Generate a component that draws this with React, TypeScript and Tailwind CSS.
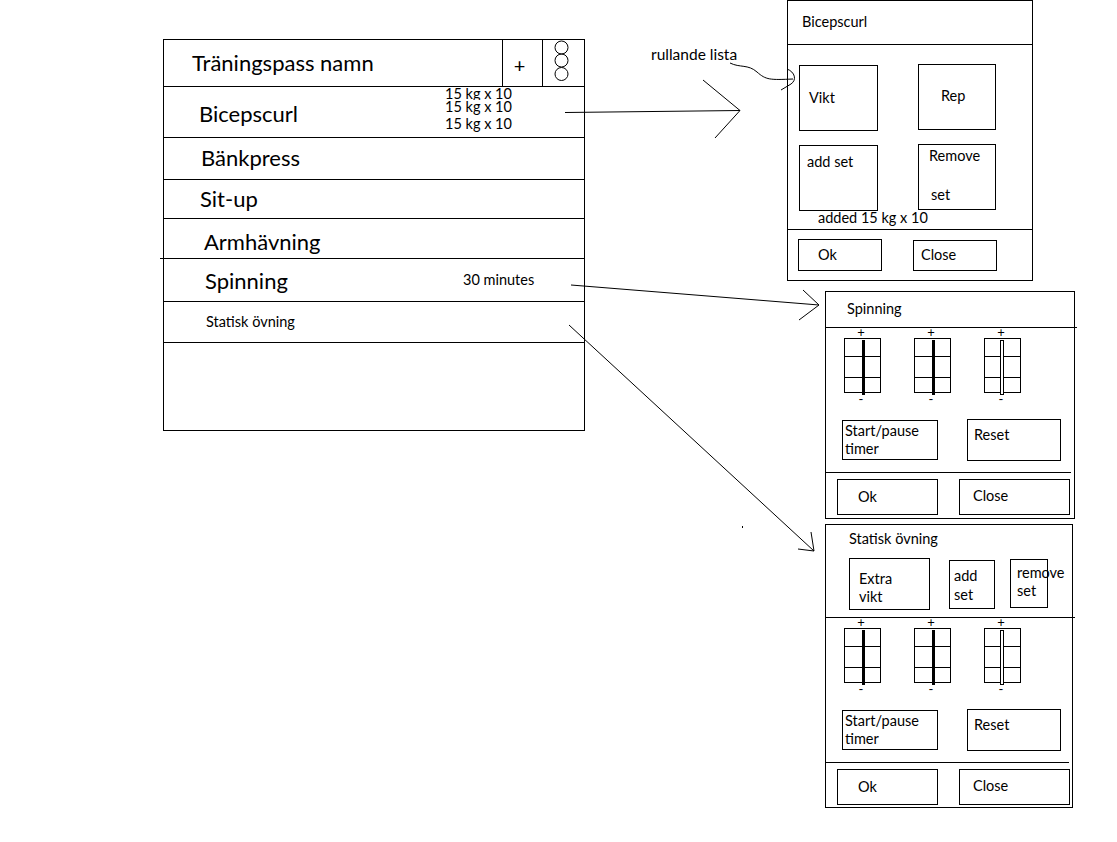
import React from 'react'

const font = "font-['Lato','Open_Sans',sans-serif]"

function Slider({ hollow }: { hollow?: boolean }) {
  return (
    <div className="flex flex-col items-center w-[37px]">
      <span className="h-[10px] text-[13px] leading-[8px] pr-[3px]">+</span>
      <svg width="37" height="58" viewBox="0 0 37 58">
        <rect x="0.5" y="0.5" width="36" height="54" fill="white" stroke="black" />
        <line x1="0" y1="18.5" x2="37" y2="18.5" stroke="black" />
        <line x1="0" y1="39.5" x2="37" y2="39.5" stroke="black" />
        {hollow
          ? <rect x="16.5" y="2.5" width="3" height="54" fill="white" stroke="black" />
          : <rect x="18" y="2" width="3" height="55" fill="black" />}
      </svg>
      <span className="h-[10px] text-[13px] leading-[6px] pr-[3px]">-</span>
    </div>
  )
}

function TimerBody() {
  return (
    <div className="h-[144px]">
      <div className="flex pl-[18px] gap-[33px]">
        <Slider />
        <Slider />
        <Slider hollow />
      </div>
      <div className="flex items-start mt-[14px]">
        <div className="ml-[16px] w-[96px] h-[40px] border border-black pl-[2px] pt-[1px] leading-[18px]">
          Start/pause<br />timer
        </div>
        <div className="ml-[29px] -mt-px w-[94px] h-[42px] border border-black pl-[6px] pt-[6px] leading-[18px]">
          Reset
        </div>
      </div>
    </div>
  )
}

function OkClose() {
  return (
    <>
      <div className="h-px bg-black mr-[3px]" />
      <div className="flex items-start pt-[6px]">
        <div className="ml-[11px] w-[101px] h-[36px] border border-black flex items-center pl-[20px]">Ok</div>
        <div className="ml-[21px] w-[111px] h-[36px] border border-black flex items-center pl-[13px] pb-[3px]">Close</div>
      </div>
    </>
  )
}

function Row({ h, children, className = '' }: { h: string; children: React.ReactNode; className?: string }) {
  return <div className={`${h} border-b border-black flex items-center ${className}`}>{children}</div>
}

export default function App() {
  return (
    <div className={`relative w-[1117px] h-[842px] bg-white text-black text-[14.5px] overflow-hidden ${font}`}>
      <div className="flex items-start">
        {/* main list */}
        <div className="pl-[163px] pt-[39px]">
          <div className="w-[422px] h-[392px] border border-black flex flex-col">
            <div className="h-[47px] border-b border-black flex">
              <div className="flex-1 flex items-center pl-[28px] pb-[2px] text-[22px]">Träningspass namn</div>
              <div className="w-[40px] border-l border-black flex items-center justify-center pr-[6px] pt-[3px] text-[20px]">+</div>
              <div className="w-[42px] border-l border-black">
                <svg width="41" height="46" viewBox="0 0 41 46">
                  <circle cx="18.5" cy="7.5" r="6.5" fill="none" stroke="black" />
                  <circle cx="18.5" cy="20.5" r="6.5" fill="none" stroke="black" />
                  <circle cx="18.5" cy="34" r="6.5" fill="none" stroke="black" />
                </svg>
              </div>
            </div>
            <div className="h-[51px] border-b border-black flex items-start pl-[35px]">
              <div className="w-[246px] pt-[14px] text-[22px] leading-[26px]">Bicepscurl</div>
              <div className="flex flex-col">
                <span className="h-[13px] leading-[14px] overflow-hidden">15 kg x 10</span>
                <span className="h-[17px] leading-[14px] bg-white">15 kg x 10</span>
                <span className="h-[14px] leading-[14px]">15 kg x 10</span>
              </div>
            </div>
            <Row h="h-[42px]" className="pl-[37px] pb-[2px] text-[22px]">Bänkpress</Row>
            <Row h="h-[39px]" className="pl-[36px] pb-[2px] text-[22px]">Sit-up</Row>
            <Row h="h-[40px]" className="pl-[40px] pt-[5px] text-[22px]">Armhävning</Row>
            <Row h="h-[43px]" className="pl-[41px] text-[22px]">
              <span className="w-[258px]">Spinning</span>
              <span className="text-[14.5px]">30 minutes</span>
            </Row>
            <Row h="h-[41px]" className="pl-[42px]">Statisk övning</Row>
            <div className="flex-1" />
          </div>
        </div>

        {/* dialogs */}
        <div className="ml-[202px] flex flex-col items-start">
          <div className="w-[246px] h-[281px] border border-black">
            <div className="h-[44px] border-b border-black flex items-center pl-[14px] pb-[2px]">Bicepscurl</div>
            <div className="h-[185px] border-b border-black pt-[20px]">
              <div className="flex items-start">
                <div className="ml-[11px] w-[79px] h-[66px] border border-black flex items-center pl-[9px]">Vikt</div>
                <div className="ml-[40px] -mt-px w-[78px] h-[66px] border border-black flex items-center pl-[22px] pb-[3px]">Rep</div>
              </div>
              <div className="flex items-start mt-[14px]">
                <div className="ml-[11px] w-[79px] h-[66px] border border-black pl-[7px] pt-[8px] leading-[16px]">add set</div>
                <div className="ml-[40px] -mt-px w-[78px] h-[66px] border border-black pl-[10px] pt-[3px] leading-[16px]">
                  <div>Remove</div>
                  <div className="mt-[23px] ml-[2px]">set</div>
                </div>
              </div>
              <div className="pl-[30px] leading-[14px]">added 15 kg x 10</div>
            </div>
            <div className="flex items-start pt-[9px]">
              <div className="ml-[10px] w-[84px] h-[32px] border border-black flex items-center pl-[19px]">Ok</div>
              <div className="ml-[31px] mt-px w-[84px] h-[31px] border border-black flex items-center pl-[7px] pb-[2px]">Close</div>
            </div>
          </div>

          <div className="ml-[38px] mt-[10px] w-[250px] h-[228px] border border-black">
            <div className="h-[36px] border-b border-black flex items-center pl-[21px] pb-[2px] -mr-[3px]">Spinning</div>
            <TimerBody />
            <OkClose />
          </div>

          <div className="ml-[38px] mt-[5px] w-[248px] h-[284px] border border-black">
            <div className="h-[93px] border-b border-black -mr-[3px]">
              <div className="h-[28px] flex items-center pl-[23px]">Statisk övning</div>
              <div className="flex items-start mt-[5px]">
                <div className="ml-[23px] w-[81px] h-[52px] border border-black pl-[9px] pt-[11px] leading-[18px]">Extra<br />vikt</div>
                <div className="ml-[19px] mt-[2px] w-[46px] h-[49px] border border-black pl-[4px] pt-[5px] leading-[19px]">add<br />set</div>
                <div className="ml-[15px] mt-px w-[38px] h-[49px] border border-black pl-[6px] pt-[4px] leading-[18px] whitespace-nowrap">remove<br />set</div>
              </div>
            </div>
            <TimerBody />
            <OkClose />
          </div>
        </div>
      </div>

      {/* annotations */}
      <div className="absolute left-[651px] top-[45px] text-[15.5px] leading-[18px]">rullande lista</div>
      <svg className="absolute inset-0 pointer-events-none" width="1117" height="842" viewBox="0 0 1117 842" fill="none" stroke="black" strokeWidth="1">
        <path d="M565 112.5 L740 110.5" />
        <path d="M703 80 L740 110.5 L715 138" />
        <path d="M730 63 C740 68 748 64 757 72 S770 80 793 79" />
        <path d="M787 69 C795 72 797 80 791 84 L781 90" />
        <path d="M571 285 L819 305" />
        <path d="M803 290 L819 305 L799 320" />
        <path d="M569 325 L814 551" />
        <path d="M811 532 L814 551 L798 549" />
        <path d="M160 258.5 L164 258.5" />
        <rect x="742" y="526" width="1" height="2" fill="black" stroke="none" />
      </svg>
    </div>
  )
}
